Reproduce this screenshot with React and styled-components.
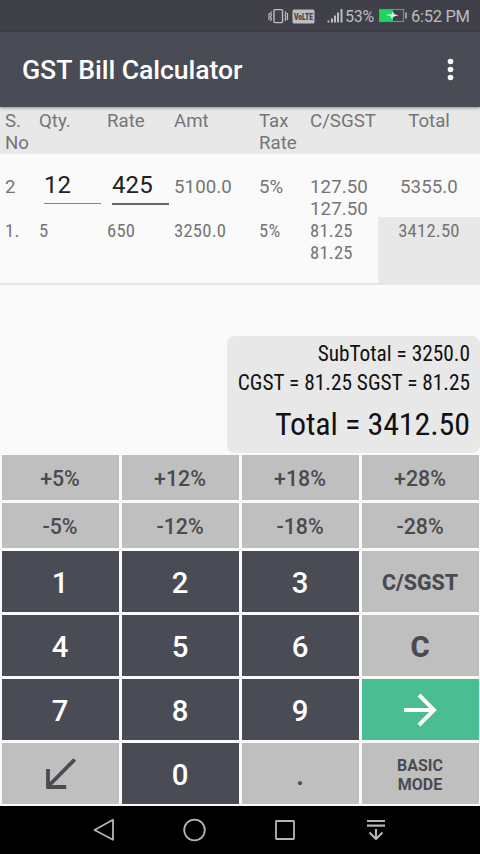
import React from "react";
import styled, { createGlobalStyle } from "styled-components";

const GlobalStyle = createGlobalStyle`
  * {
    box-sizing: border-box;
  }
  body {
    margin: 0;
    background: #fafafa;
    font-family: Roboto, sans-serif;
  }
`;

const Screen = styled.div`
  display: flex;
  flex-direction: column;
  width: 480px;
  height: 854px;
  overflow: hidden;
  background: #fafafa;
`;

const StatusBar = styled.div`
  display: flex;
  align-items: center;
  height: 32px;
  flex: none;
  padding-left: 268px;
  background: #3f4048;
  color: #bdbdc1;
  font-size: 16px;
  white-space: nowrap;

  svg {
    flex: none;
  }
`;

const Percent = styled.span`
  width: 34px;
  letter-spacing: -0.3px;
`;

const Clock = styled.span`
  font-size: 16.5px;
  letter-spacing: -0.3px;
`;

const AppBar = styled.header`
  display: flex;
  align-items: center;
  justify-content: space-between;
  height: 75px;
  flex: none;
  padding: 1px 25px 0 22px;
  background: #494b55;
  box-shadow: 0 1px 3px rgba(0, 0, 0, 0.4);
  z-index: 1;
`;

const Title = styled.h1`
  margin: 0;
  color: #fff;
  font-size: 26.67px;
  font-weight: 500;
  letter-spacing: -0.08px;
`;

const Row = styled.div`
  display: grid;
  grid-template-columns: 34px 68px 67px 85px 51px 68px 102px;
  flex: none;
  padding-left: 5px;
  color: #757575;
  font-size: 18.67px;
  line-height: 22px;
`;

const HeaderRow = styled(Row)`
  height: 47px;
  padding-top: 3px;
  background: #e8e8e8;
`;

const EditRow = styled(Row)`
  height: 63px;
  padding-top: 22px;
  letter-spacing: 0.1px;
`;

const ItemRow = styled(Row)`
  height: 68px;
  border-bottom: 2px solid #e6e6e6;
  font-stretch: 75%;
  letter-spacing: 0.2px;
`;

const Cell = styled.span`
  padding-top: ${(props) => props.$top || 0}px;
  white-space: pre-line;
`;

const TotalCell = styled(Cell)`
  text-align: center;
  background: ${(props) => (props.$shaded ? "#e8e8e8" : "transparent")};
`;

const Field = styled.div`
  width: 57px;
  height: ${(props) => (props.$focused ? 34 : 33)}px;
  margin: -5px 0 0 5px;
  color: #212121;
  font-size: 24px;
  line-height: 28px;
  border-bottom: ${(props) => (props.$focused ? "2px solid #66666a" : "1px solid #858585")};
`;

const Summary = styled.div`
  align-self: flex-end;
  width: 253px;
  height: 117px;
  margin-top: auto;
  margin-bottom: 2px;
  padding: 3px 10px 0 0;
  border-radius: 8px;
  background: #e8e8e8;
  color: #111;
  font-size: 21.33px;
  font-stretch: 75%;
  line-height: 29px;
  text-align: right;
  white-space: nowrap;
`;

const GrandTotal = styled.div`
  margin-top: 8px;
  font-size: 32px;
  line-height: 39px;
  letter-spacing: -0.1px;
`;

const Keypad = styled.div`
  display: grid;
  grid-template-columns: repeat(4, 117px);
  grid-template-rows: 45px 45px repeat(4, 61px);
  gap: 3px;
  flex: none;
  height: 351px;
  padding: 0 1.5px;
`;

const keyColors = {
  light: ["#bfbfbf", "#494b51"],
  dark: ["#494b55", "#fff"],
  green: ["#4abd92", "#fff"],
};

const Key = styled.button`
  display: flex;
  align-items: center;
  justify-content: center;
  padding: ${(props) => props.$pad}px 0 0;
  border: 0;
  background: ${(props) => keyColors[props.$tone][0]};
  color: ${(props) => keyColors[props.$tone][1]};
  font-family: inherit;
  font-size: ${(props) => props.$size}px;
  font-weight: ${(props) => props.$weight || 500};
  line-height: 1.172;
  white-space: pre-line;
`;

const NavBar = styled.nav`
  display: flex;
  align-items: center;
  gap: 66px;
  flex: none;
  height: 48px;
  padding-left: 92px;
  background: #000;
`;

const StatusIcons = () => (
  <svg width="77" height="20" viewBox="0 0 77 20" fill="none" stroke="#bdbdc1">
    <rect x="6" y="3.6" width="8.5" height="13" rx="1" strokeWidth="1.4" />
    <path d="M3.5 5.5l-1 2 1 1.7-1 1.8 1 2-1 2M1 7v7M17 5.5l1 2-1 1.7 1 1.8-1 2 1 2M19.5 7v7" strokeWidth="1.2" />
    <rect x="24.5" y="3.5" width="22" height="14" rx="1.5" fill="#bdbdc1" stroke="none" />
    <text
      x="35.5"
      y="14"
      fill="#3f4048"
      stroke="none"
      fontSize="9.5"
      fontWeight="900"
      textAnchor="middle"
      textLength="19"
      lengthAdjust="spacingAndGlyphs"
    >
      VoLTE
    </text>
    <path d="M60.5 14.5v2M64 12.5v4M67 9.5v7M70 6.5v10M73.5 3v13.5" strokeWidth="2" />
  </svg>
);

const Battery = () => (
  <svg width="32" height="20" viewBox="0 0 32 20">
    <rect x="0.5" y="3.5" width="24" height="12" fill="none" stroke="#85868b" strokeWidth="1.2" />
    <rect x="1" y="4" width="13" height="11" fill="#1fd561" />
    <path d="M7 9l5.6-.8 1.4-2.6 1.2 2.7 4.2.9-5 1.5-1.5 2.4-1.3-2.8z" fill="#e4fbed" />
    <path d="M27 6.5v6" stroke="#bdbdc1" strokeWidth="1.5" />
  </svg>
);

const ArrowDownLeft = () => (
  <svg width="32" height="32" viewBox="0 0 32 32" fill="none" stroke="#4b4c51" strokeWidth="3.8">
    <path d="M30.7 1.5L5 27.5M4 11v18M2.2 29h20" />
  </svg>
);

const ArrowRight = () => (
  <svg width="34" height="34" viewBox="0 0 34 34" fill="none" stroke="#fff" strokeWidth="3.9">
    <path d="M1 17h30M16 2l15 15-15 15" />
  </svg>
);

const NavIcon = ({ children }) => (
  <svg width="24" height="24" viewBox="0 0 24 24" fill="none" stroke="#b5b5b5" strokeWidth="1.8">
    {children}
  </svg>
);

const keys = [
  ...["+5%", "+12%", "+18%", "+28%", "-5%", "-12%", "-18%", "-28%"].map((label) => ({
    label,
    tone: "light",
    size: 21.33,
    pad: 2,
  })),
  { label: "1" },
  { label: "2" },
  { label: "3" },
  { label: "C/SGST", tone: "light", size: 21.33, weight: 800, pad: 2 },
  { label: "4" },
  { label: "5" },
  { label: "6" },
  { label: "C", tone: "light", size: 29.33, weight: 800 },
  { label: "7" },
  { label: "8" },
  { label: "9" },
  { label: <ArrowRight />, tone: "green", pad: 0 },
  { label: <ArrowDownLeft />, tone: "light", pad: 0 },
  { label: "0" },
  { label: ".", tone: "light", size: 29.33 },
  { label: "BASIC\nMODE", tone: "light", size: 16, weight: 700, pad: 4 },
];

const App = () => {
  return (
    <Screen>
      <GlobalStyle />
      <StatusBar>
        <StatusIcons />
        <Percent>53%</Percent>
        <Battery />
        <Clock>6:52 PM</Clock>
      </StatusBar>
      <AppBar>
        <Title>GST Bill Calculator</Title>
        <svg width="9" height="24" viewBox="0 0 9 24" fill="#fff">
          <circle cx="4.5" cy="3.5" r="2.8" />
          <circle cx="4.5" cy="11.5" r="2.8" />
          <circle cx="4.5" cy="19.5" r="2.8" />
        </svg>
      </AppBar>
      <HeaderRow>
        <Cell>{"S.\nNo"}</Cell>
        <Cell>Qty.</Cell>
        <Cell>Rate</Cell>
        <Cell>Amt</Cell>
        <Cell>{"Tax\nRate"}</Cell>
        <Cell>C/SGST</Cell>
        <TotalCell>Total</TotalCell>
      </HeaderRow>
      <EditRow>
        <Cell>2</Cell>
        <Field>12</Field>
        <Field $focused>425</Field>
        <Cell>5100.0</Cell>
        <Cell>5%</Cell>
        <Cell>{"127.50\n127.50"}</Cell>
        <TotalCell>5355.0</TotalCell>
      </EditRow>
      <ItemRow>
        <Cell $top={3}>1.</Cell>
        <Cell $top={3}>5</Cell>
        <Cell $top={3}>650</Cell>
        <Cell $top={3}>3250.0</Cell>
        <Cell $top={3}>5%</Cell>
        <Cell $top={3}>{"81.25\n81.25"}</Cell>
        <TotalCell $top={3} $shaded>
          3412.50
        </TotalCell>
      </ItemRow>
      <Summary>
        <div>SubTotal = 3250.0</div>
        <div>CGST = 81.25 SGST = 81.25</div>
        <GrandTotal>Total = 3412.50</GrandTotal>
      </Summary>
      <Keypad>
        {keys.map((key, index) => (
          <Key
            key={index}
            $tone={key.tone || "dark"}
            $size={key.size || 29.33}
            $weight={key.weight}
            $pad={key.pad ?? 3}
          >
            {key.label}
          </Key>
        ))}
      </Keypad>
      <NavBar>
        <NavIcon>
          <path d="M21 1.8v20L2.5 12z" strokeLinejoin="round" />
        </NavIcon>
        <NavIcon>
          <circle cx="12.5" cy="12" r="10.3" />
        </NavIcon>
        <NavIcon>
          <rect x="4" y="3" width="18" height="18" rx="0.5" />
        </NavIcon>
        <NavIcon>
          <path d="M5 3h18M5 7.6h18M14 11v10M7.5 14.5L14 21l6.5-6.5" strokeWidth="2.1" />
        </NavIcon>
      </NavBar>
    </Screen>
  );
};

export default App;
